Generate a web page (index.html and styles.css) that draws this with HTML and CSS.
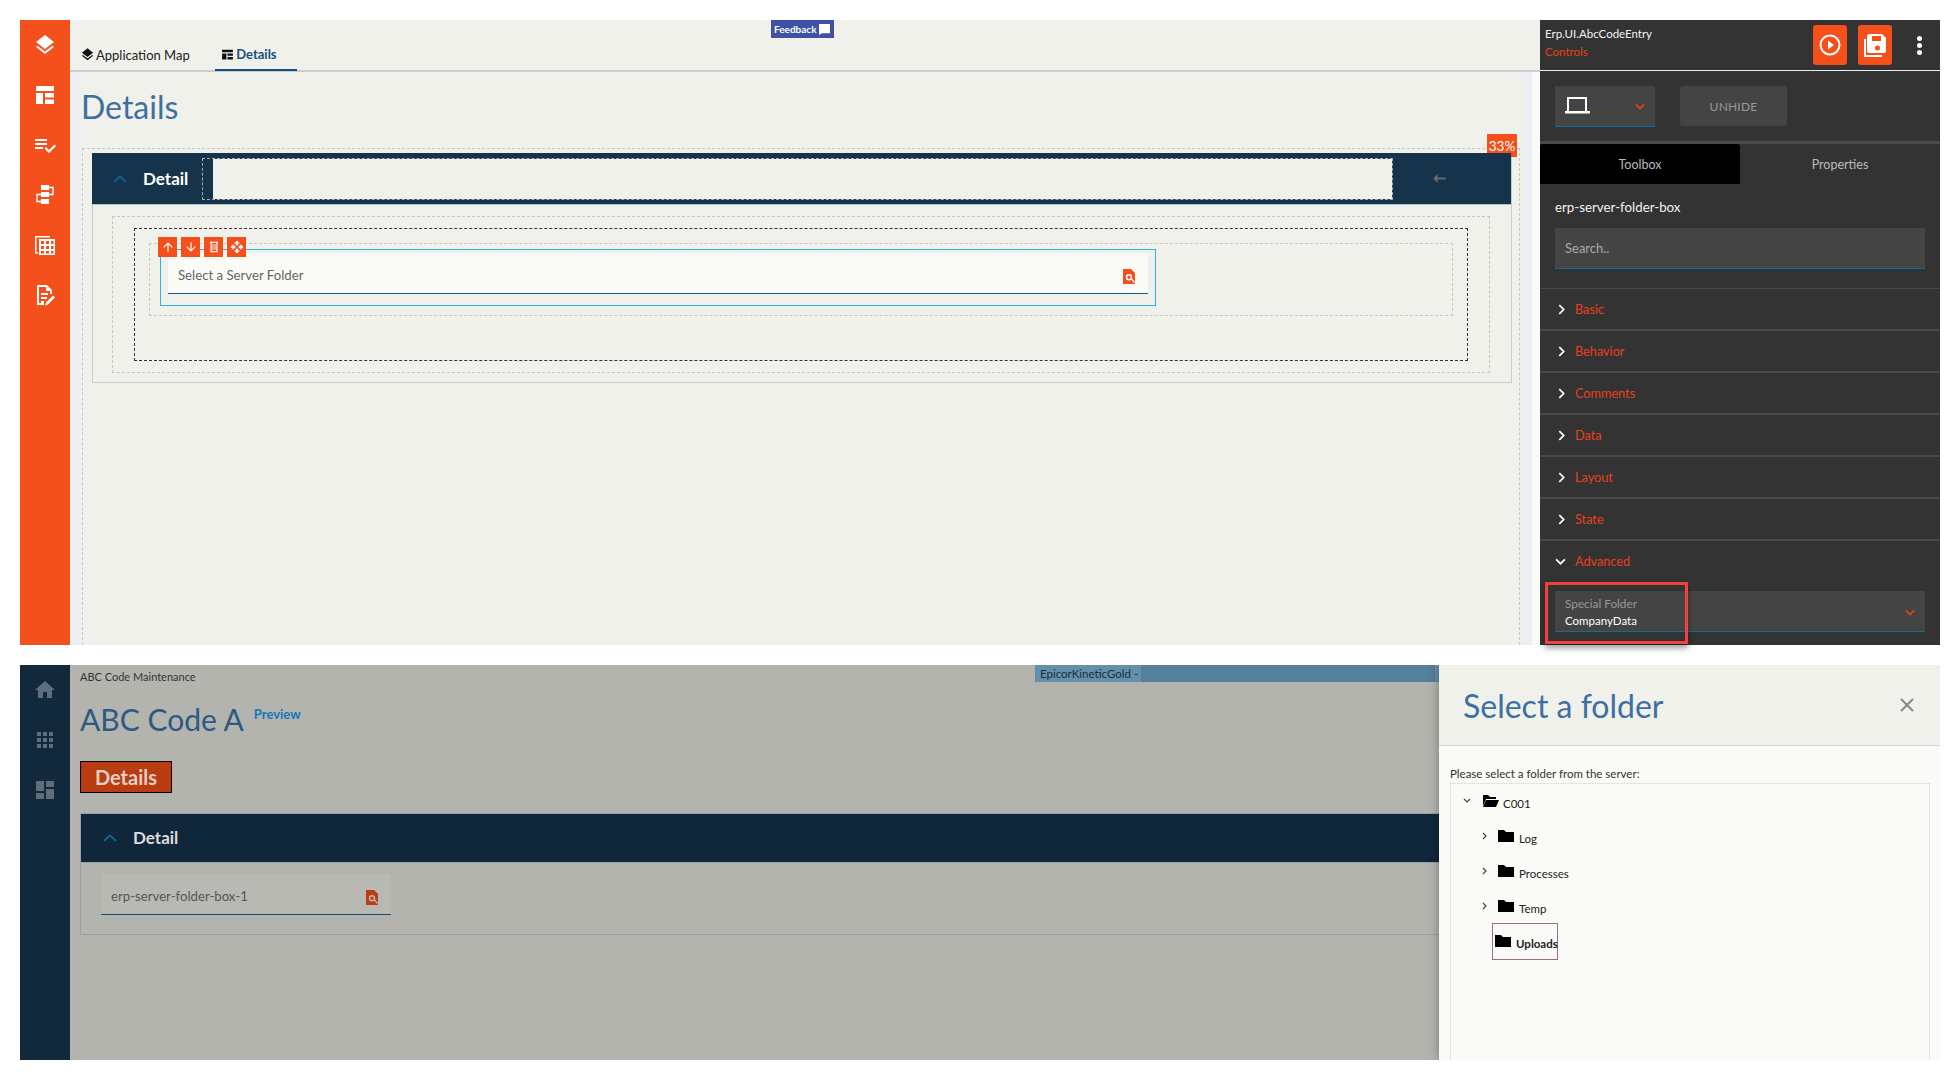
FILE: index.html
```html
<!DOCTYPE html>
<html lang="en">
<head>
<meta charset="utf-8">
<title>Server Folder Box</title>
<link rel="stylesheet" href="styles.css">
</head>
<body>
<section class="shot designer">
  <nav class="rail rail-orange">
    <svg viewBox="0 0 24 24"><path d="M11.99 18.54l-7.37-5.73L3 14.07l9 7 9-7-1.63-1.27-7.38 5.74zM12 16l7.36-5.73L21 9l-9-7-9 7 1.63 1.27L12 16z"/></svg>
    <svg viewBox="0 0 24 24"><path d="M3 3h18v5H3zM3 10h7v11H3zM12 10h9v4.500h-9zM12 16.500h9V21h-9z"/></svg>
    <svg viewBox="0 0 24 24"><path d="M14 10H2v2h12v-2zm0-4H2v2h12V6zM2 16h8v-2H2v2zm19.500-4.500L23 13l-6.990 7-4.510-4.500L13 14l3.010 3 5.490-5.500z"/></svg>
    <svg viewBox="0 0 24 24"><path d="M8 2h8v5H8zM8 9h8v5H8zM8 16h8v5H8z"/><path class="wire" d="M16 4.500h4v7h-4M8 11.500H4v7h4"/></svg>
    <svg viewBox="0 0 24 24"><path d="M2 3h15v1.500H3.500V19H5v1.500H2z"/><path fill-rule="evenodd" d="M6 6h16v16H6zM8 8v3h3V8zm5 0v3h3V8zm5 0v3h2.500V8zM8 13v3h3v-3zm5 0v3h3v-3zm5 0v3h2.500v-3zM8 18v2.500h3V18zm5 0v2.500h3V18zm5 0v2.500h2.500V18z"/></svg>
    <svg viewBox="0 0 24 24"><path d="M4 2h10l5 5v4h-2V8h-4V4H6v16h5v2H4zM8 10h7v2H8zM8 14h6v2H8zM8 18h3v2H8zM20 12.500l2 2-7 7-3 1 1-3z"/></svg>
  </nav>
  <main class="canvas">
    <header class="tabs">
      <a class="tab">
        <svg class="tab-icon tab-icon-map" viewBox="0 0 24 24"><path d="M11.990 18.540l-7.370-5.730L3 14.070l9 7 9-7-1.630-1.270-7.380 5.740zM12 16l7.360-5.730L21 9l-9-7-9 7 1.630 1.270L12 16z"/></svg>
        Application Map
      </a>
      <a class="tab tab-active">
        <svg class="tab-icon" viewBox="0 0 24 24"><path d="M2 3h20v5H2zM2 10h8v11H2zM12 10h10v4.500H12zM12 16.500h10V21H12z"/></svg>
        Details
      </a>
    </header>
    <div class="feedback">Feedback
      <svg viewBox="0 0 12 12"><path d="M0 0h12v10H3l-3 2z"/></svg>
    </div>
    <div class="workspace">
      <div class="page">
        <h1 class="page-title">Details</h1>
        <div class="drop-zone">
          <span class="percent">33%</span>
          <section class="panel">
            <div class="panel-head">
              <svg class="chev-up" viewBox="0 0 14 8"><path d="M1 7l6-5.500L13 7"/></svg>
              <span class="panel-name">Detail</span>
              <div class="head-slot"><div class="head-fill"></div></div>
              <svg class="head-arrow" viewBox="0 0 14 10"><path d="M5 0L0 5l5 5V6h9V4H5z"/></svg>
            </div>
            <div class="panel-body">
              <div class="dash-gray">
                <div class="dash-black">
                  <div class="dash-gray dash-row">
                    <div class="selected">
                      <div class="toolbar">
                        <button class="tool"><svg viewBox="0 0 24 24"><path d="M4 12l1.410 1.410L11 7.830V20h2V7.830l5.580 5.590L20 12l-8-8-8 8z"/></svg></button>
                        <button class="tool"><svg viewBox="0 0 24 24"><path d="M20 12l-1.410-1.410L13 16.170V4h-2v12.170l-5.580-5.590L4 12l8 8 8-8z"/></svg></button>
                        <button class="tool"><svg viewBox="0 0 24 24"><path fill-rule="evenodd" d="M5 3h14v2h-1v16H6V5H5zm3 2v14h8V5zm1.500 2h1.500v10H9.500zm3.500 0h1.500v10H13z"/></svg></button>
                        <button class="tool"><svg viewBox="0 0 24 24"><path d="M10 9h4V6h3l-5-5-5 5h3v3zm-1 1H6V7l-5 5 5 5v-3h3v-4zm14 2l-5-5v3h-3v4h3v3l5-5zm-9 3h-4v3H7l5 5 5-5h-3v-3z"/></svg></button>
                      </div>
                      <div class="field field-light">
                        <span>Select a Server Folder</span>
                        <svg class="file-search" viewBox="0 0 12 15"><path fill-rule="evenodd" d="M0 0h8l4 4v11H0zm6 5a3.200 3.200 0 100 6.400 3.200 3.200 0 000-6.400zm0 1.500a1.700 1.700 0 110 3.400 1.700 1.700 0 010-3.400z"/><path class="glass" d="M8 10.500l1-1 3 3.500-1 1z"/></svg>
                      </div>
                    </div>
                  </div>
                </div>
              </div>
            </div>
          </section>
        </div>
      </div>
    </div>
  </main>
  <aside class="props">
    <header class="props-head">
      <div class="props-title">
        <div class="props-name">Erp.UI.AbcCodeEntry</div>
        <div class="props-sub">Controls</div>
      </div>
      <button class="action"><svg viewBox="0 0 24 24"><circle cx="12" cy="12" r="9.500" class="ring"/><path d="M10 7.500l6 4.500-6 4.500z"/></svg></button>
      <button class="action"><svg viewBox="0 0 24 24"><path fill-rule="evenodd" d="M6 1h13l4 4v13c0 1-1 2-2 2H6c-1 0-2-1-2-2V3c0-1 1-2 2-2zm3 2v5h9V3zm5.500 9.500a2.500 2.500 0 100 5 2.500 2.500 0 000-5z"/><path d="M1 6h2v16h16v2H1z"/></svg></button>
      <div class="kebab"><i></i><i></i><i></i></div>
    </header>
    <div class="device-row">
      <div class="device">
        <svg class="laptop" viewBox="0 0 25 17"><path fill-rule="evenodd" d="M2 0h20v14h3v2.500H0V14h2zm2 2v12h16V2z"/></svg>
        <svg class="chev-red" viewBox="0 0 12 8"><path d="M1 1.500l5 5 5-5"/></svg>
      </div>
      <button class="unhide">UNHIDE</button>
    </div>
    <div class="props-tabs">
      <div class="props-tab props-tab-on">Toolbox</div>
      <div class="props-tab">Properties</div>
    </div>
    <div class="control-name">erp-server-folder-box</div>
    <div class="search">Search..</div>
    <div class="groups">
      <div class="group"><svg class="chev-white" viewBox="0 0 8 12"><path d="M1.500 1l5 5-5 5"/></svg>Basic</div>
      <div class="group"><svg class="chev-white" viewBox="0 0 8 12"><path d="M1.500 1l5 5-5 5"/></svg>Behavior</div>
      <div class="group"><svg class="chev-white" viewBox="0 0 8 12"><path d="M1.500 1l5 5-5 5"/></svg>Comments</div>
      <div class="group"><svg class="chev-white" viewBox="0 0 8 12"><path d="M1.500 1l5 5-5 5"/></svg>Data</div>
      <div class="group"><svg class="chev-white" viewBox="0 0 8 12"><path d="M1.500 1l5 5-5 5"/></svg>Layout</div>
      <div class="group"><svg class="chev-white" viewBox="0 0 8 12"><path d="M1.500 1l5 5-5 5"/></svg>State</div>
      <div class="group group-open"><svg class="chev-white chev-down" viewBox="0 0 12 8"><path d="M1 1.500l5 5 5-5"/></svg>Advanced</div>
    </div>
    <div class="special">
      <div class="special-text">
        <div class="special-label">Special Folder</div>
        <div class="special-value">CompanyData</div>
      </div>
      <svg class="chev-red" viewBox="0 0 12 8"><path d="M1 1.500l5 5 5-5"/></svg>
    </div>
    <div class="callout"></div>
  </aside>
</section>

<section class="shot runtime">
  <nav class="rail rail-navy">
    <svg viewBox="0 0 24 24"><path d="M10 20v-6h4v6h5v-8h3L12 3 2 12h3v8z"/></svg>
    <svg viewBox="0 0 24 24"><path d="M4 8h4V4H4v4zm6 12h4v-4h-4v4zm-6 0h4v-4H4v4zm0-6h4v-4H4v4zm6 0h4v-4h-4v4zm6-10v4h4V4h-4zm-6 4h4V4h-4v4zm6 6h4v-4h-4v4zm0 6h4v-4h-4v4z"/></svg>
    <svg viewBox="0 0 24 24"><path d="M3 13h8V3H3v10zm0 8h8v-6H3v6zm10 0h8V11h-8v10zm0-18v6h8V3h-8z"/></svg>
  </nav>
  <main class="app">
    <div class="banner">
      <span class="banner-text">EpicorKineticGold -</span>
      <span class="banner-fill"></span>
      <span class="banner-end"></span>
    </div>
    <div class="crumb">ABC Code Maintenance</div>
    <div class="app-title">
      <h1>ABC Code A</h1>
      <span class="preview">Preview</span>
    </div>
    <button class="details-btn">Details</button>
    <section class="app-panel">
      <div class="app-panel-head">
        <svg class="chev-up" viewBox="0 0 14 8"><path d="M1 7l6-5.500L13 7"/></svg>
        <span class="app-panel-name">Detail</span>
      </div>
      <div class="app-panel-body">
        <div class="field field-dim">
          <span>erp-server-folder-box-1</span>
          <svg class="file-search" viewBox="0 0 12 15"><path fill-rule="evenodd" d="M0 0h8l4 4v11H0zm6 5a3.200 3.200 0 100 6.400 3.200 3.200 0 000-6.400zm0 1.500a1.700 1.700 0 110 3.400 1.700 1.700 0 010-3.400z"/><path class="glass" d="M8 10.500l1-1 3 3.500-1 1z"/></svg>
        </div>
      </div>
    </section>
  </main>
  <aside class="drawer">
    <header class="drawer-head">
      <h2>Select a folder</h2>
      <svg class="close" viewBox="0 0 14 14"><path d="M1 1l12 12M13 1L1 13"/></svg>
    </header>
    <div class="drawer-body">
      <div class="tree-label">Please select a folder from the server:</div>
      <div class="tree">
        <div class="node node-root">
          <svg class="twist" viewBox="0 0 8 6"><path d="M1 1l3 3 3-3"/></svg>
          <svg class="folder" viewBox="0 0 16 12"><path d="M0 0h5l2 2h6v2H3L0 11zM3 5h13l-3 7H0z"/></svg>
          <span>C001</span>
        </div>
        <div class="node node-child">
          <svg class="twist twist-right" viewBox="0 0 6 8"><path d="M1 1l3 3-3 3"/></svg>
          <svg class="folder" viewBox="0 0 16 12"><path d="M0 0h6l2 2h8v10H0z"/></svg>
          <span>Log</span>
        </div>
        <div class="node node-child">
          <svg class="twist twist-right" viewBox="0 0 6 8"><path d="M1 1l3 3-3 3"/></svg>
          <svg class="folder" viewBox="0 0 16 12"><path d="M0 0h6l2 2h8v10H0z"/></svg>
          <span>Processes</span>
        </div>
        <div class="node node-child">
          <svg class="twist twist-right" viewBox="0 0 6 8"><path d="M1 1l3 3-3 3"/></svg>
          <svg class="folder" viewBox="0 0 16 12"><path d="M0 0h6l2 2h8v10H0z"/></svg>
          <span>Temp</span>
        </div>
        <div class="node-selected">
          <svg class="folder" viewBox="0 0 16 12"><path d="M0 0h6l2 2h8v10H0z"/></svg>
          <span>Uploads</span>
        </div>
      </div>
    </div>
  </aside>
</section>
</body>
</html>
```
FILE: styles.css
```css
* { box-sizing: border-box; }
html, body { margin: 0; padding: 0; }
body {
  width: 1960px;
  height: 1080px;
  padding: 20px;
  background: #fff;
  overflow: hidden;
  font-family: "Lato", "Noto Sans", sans-serif;
  display: flex;
  flex-direction: column;
  gap: 20px;
}
h1, h2 { margin: 0; font-weight: 400; }
button { font-family: inherit; border: 0; padding: 0; }

.shot { display: flex; width: 1920px; position: relative; flex: none; }
.designer { height: 625px; }
.runtime { height: 395px; overflow: hidden; }

.rail { width: 50px; flex: none; display: flex; flex-direction: column; align-items: center; }
.rail svg { fill: #fff; width: 24px; height: 24px; flex: none; }
.rail .wire { fill: none; stroke: #fff; stroke-width: 1.500; }
.rail-orange { background: #f4501c; padding-top: 13px; gap: 26px; }
.rail-navy { background: #12293b; padding-top: 13px; gap: 26px; }
.rail-navy svg { fill: #5f6e7a; }

/* designer canvas */
.canvas { width: 1470px; flex: none; background: #f0f1eb; display: flex; flex-direction: column; position: relative; }
.tabs { height: 52px; flex: none; border-bottom: 2px solid #cccccb; display: flex; align-items: flex-end; padding-left: 10px; gap: 25px; }
.tab { height: 50px; display: flex; align-items: center; padding-top: 19px; font-size: 13px; color: #222; gap: 2px; position: relative; }
.tab-icon { width: 13px; height: 13px; fill: #111; flex: none; }
.tab-icon-map { width: 15px; height: 15px; margin-right: -1px; }
.tab-active { width: 82px; justify-content: flex-start; padding-left: 6.500px; color: #15507a; font-weight: 700; border-bottom: 2px solid #15507a; height: 51px; margin-bottom: -1px; }

.feedback { position: absolute; left: 701px; top: 0; width: 63px; height: 18px; background: #3f51a5; color: #fff; font-size: 10px; font-weight: 700; display: flex; align-items: center; justify-content: space-between; padding: 0 4px 0 3px; }
.feedback svg { width: 11px; height: 11px; fill: #fff; }

.workspace { flex: 1; min-height: 0; display: flex; border-right: 8px solid #fafaf6; }
.page { flex: 1; min-width: 0; border-left: 11px solid #ecf0f3; border-right: 11px solid #ecf0f3; display: flex; flex-direction: column; }
.page-title { height: 76px; flex: none; font-size: 32px; line-height: 70px; color: #3d6f9f; }

.drop-zone { flex: 1; min-height: 0; margin: 0 1px 0 1px; border: 1px dashed #c6c6c2; border-bottom: 0; padding: 4px 7px 0 9px; position: relative; }
.percent { position: absolute; right: 2px; top: -15px; width: 30px; height: 23px; background: #f4501c; color: #fff; font-size: 13.500px; display: flex; align-items: center; justify-content: center; }

.panel { border: 1px solid #c4cdd0; border-top: 0; height: 230px; }
.panel-head { height: 52px; background: #15344b; border-bottom: 1px solid #a9c6d4; display: flex; align-items: center; padding-left: 21px; position: relative; margin: 0 0 0 -1px; }
.chev-up { width: 14px; height: 8px; fill: none; stroke: #15608f; stroke-width: 2; flex: none; }
.panel-name { color: #fff; font-weight: 700; font-size: 17px; margin-left: 16px; width: 59px; flex: none; }
.head-slot { width: 1191px; height: 42px; border: 1px dashed #aaa; padding-left: 10px; flex: none; }
.head-fill { height: 100%; background: #f0f1eb; }
.head-arrow { width: 13px; height: 9px; fill: #66696b; margin-left: 40px; flex: none; }

.panel-body { padding: 11px 21px 10px 19px; }
.dash-gray { border: 1px dashed #c6c6c2; padding: 11px 21px 11px 21px; }
.dash-black { border: 1px dashed #333; padding: 14px 14px 44px 14px; height: 133px; }
.dash-row { padding: 5px 296px 0 10px; height: 73px; }
.selected { border: 1px solid #2bb5e0; padding: 3px 7px 0 7px; height: 57px; position: relative; width: 996px; }
.toolbar { position: absolute; left: -3px; top: -13px; display: flex; gap: 4px; }
.tool { width: 19px; height: 20px; background: #f4501c; display: flex; align-items: center; justify-content: center; }
.tool svg { width: 14px; height: 14px; fill: #fff; }

.field { display: flex; align-items: center; justify-content: space-between; font-size: 13.200px; }
.field-light { height: 41px; background: #fafaf6; border-bottom: 1px solid #15608a; color: #666; padding: 3px 13px 0 10px; }
.field-dim { width: 290px; height: 41px; background: #b9b9b4; border-bottom: 1px solid #0f4f7a; color: #555; padding: 3px 13px 0 10px; }
.file-search { width: 12px; height: 15px; fill: #f4501c; margin-top: 3px; }
.file-search .glass { fill: #fafaf6; }
.field-dim .file-search { fill: #b93c12; margin-top: 4px; }
.field-dim .file-search .glass { fill: #b9b9b4; }

/* properties */
.props { width: 400px; flex: none; background: #333; position: relative; color: #ddd; }
.props-head { height: 51px; border-bottom: 1px solid #eee; display: flex; padding: 5px 0 0 5px; position: relative; }
.props-title { width: 268px; flex: none; }
.props-name { font-size: 11.500px; line-height: 18px; color: #f2f2f2; }
.props-sub { font-size: 11.500px; line-height: 18px; color: #e8401c; }
.action { width: 34px; height: 40px; background: #f4501c; border-radius: 3px; display: flex; align-items: center; justify-content: center; flex: none; margin-right: 11px; }
.action svg { width: 24px; height: 24px; fill: #fff; }
.action .ring { fill: none; stroke: #fff; stroke-width: 2; }
.kebab { display: flex; flex-direction: column; gap: 2px; margin: 11px 0 0 14px; }
.kebab i { display: block; width: 5px; height: 5px; border-radius: 50%; background: #fff; }

.device-row { height: 73px; padding-top: 15px; padding-left: 15px; display: flex; gap: 25px; border-bottom: 3px solid #4a4a4a; }
.device { width: 100px; height: 41px; background: #444; border-bottom: 1px solid #106aa5; display: flex; justify-content: space-between; padding: 11px 9px 0 10px; }
.laptop { width: 25px; height: 17px; fill: #fff; }
.chev-red { width: 10px; height: 7px; fill: none; stroke: #e8401c; stroke-width: 2; align-self: center; flex: none; }
.device .chev-red { align-self: flex-start; margin-top: 6px; margin-right: 1px; }
.unhide { width: 107px; height: 40px; background: #444; color: #999; border-radius: 3px; font-size: 12px; letter-spacing: .2px; padding-top: 1px; }

.props-tabs { display: flex; height: 40px; }
.props-tab { width: 200px; color: #bbb; font-size: 12.500px; display: flex; align-items: center; justify-content: center; }
.props-tab-on { background: #000; border-radius: 3px 3px 0 0; }
.control-name { margin: 15px 0 0 15px; font-size: 13.300px; line-height: 17px; color: #f2f2f2; }
.search { margin: 12px 15px 0; height: 41px; background: #444; border-bottom: 1px solid #106aa5; padding: 0 10px; color: #aaa; font-size: 13px; line-height: 40px; }
.groups { margin-top: 19px; }
.group { height: 42px; border-top: 2px solid #4a4a4a; color: #e8401c; font-size: 12.700px; display: flex; align-items: center; padding-left: 18px; gap: 10px; }
.group:first-child { border-top-width: 1px; height: 41px; }
.chev-white { width: 7px; height: 11px; fill: none; stroke: #fff; stroke-width: 2; flex: none; }
.chev-down { width: 11px; height: 7px; margin-left: -3px; margin-right: -1px; }
.special { margin: 10px 15px 0; height: 41px; background: #444; border-bottom: 1px solid #106aa5; display: flex; justify-content: space-between; align-items: center; padding: 2px 10px 0; }
.special-label { font-size: 11.800px; line-height: 17px; color: #999; }
.special-value { font-size: 11.500px; line-height: 17px; color: #fff; }
.callout { position: absolute; left: 5px; top: 562px; width: 143px; height: 62px; border: 3px solid #f04040; box-shadow: 0 4px 6px rgba(0,0,0,.4); }

/* runtime */
.app { width: 1369px; flex: none; background: #b4b4af; padding: 0 0 0 10px; position: relative; overflow: hidden; }
.banner { position: absolute; right: 0; top: 0; left: 965px; height: 17px; display: flex; font-size: 12px; color: #1c2f40; }
.banner-text { background: #6590ac; padding: 0 4px 0 5px; line-height: 17px; width: 106px; white-space: nowrap; flex: none; overflow: hidden; font-size: 11.500px; }
.banner-fill { flex: 1; background: #54809c; }
.banner-end { width: 4px; background: #6590ac; }
.crumb { font-size: 11px; line-height: 15px; padding-top: 4px; color: #333; height: 22px; }
.app-title { height: 74px; display: flex; align-items: flex-start; gap: 10px; }
.app-title h1 { font-size: 30px; line-height: 44px; color: #2d5a82; padding-top: 10px; }
.preview { color: #1377ba; font-weight: 700; font-size: 13px; line-height: 16px; margin-top: 19px; }
.details-btn { display: block; width: 92px; height: 32px; background: #b93c12; border: 1px solid #000; color: #e4cfc4; font-size: 20px; font-weight: 700; }
.app-panel { margin-top: 20px; border: 1px solid #96a0a5; height: 122px; margin-right: -20px; }
.app-panel-head { height: 49px; background: #10273b; display: flex; align-items: center; padding-left: 22px; border-bottom: 1px solid #8fa4b0; padding-bottom: 1px; }
.app-panel-name { color: #ddd; font-weight: 700; font-size: 17px; margin-left: 16px; }
.app-panel-body { padding: 11px 20px; }

.drawer { width: 501px; flex: none; background: #fafaf7; position: relative; z-index: 2; box-shadow: 0 0 10px rgba(0,0,0,.35); }
.drawer-head { height: 81px; background: #f0f1eb; border-bottom: 1px solid #d6d6d2; display: flex; align-items: center; justify-content: space-between; padding: 0 26px 0 24px; }
.drawer-head h2 { font-size: 32px; color: #3d70a0; }
.close { width: 14px; height: 14px; fill: none; stroke: #888; stroke-width: 2; }
.drawer-body { padding: 20px 0 0 11px; }
.tree-label { font-size: 11.500px; line-height: 15px; color: #333; margin-bottom: 2px; }
.tree { width: 480px; height: 290px; border: 1px solid #e5e5e0; padding: 5px 0 0 12px; font-size: 11.500px; color: #222; }
.node { height: 35px; display: flex; align-items: flex-start; }
.twist { width: 8px; height: 6px; fill: none; stroke: #444; stroke-width: 1.200; margin-top: 9px; flex: none; }
.twist-right { width: 6px; height: 8px; margin-top: 8px; }
.folder { width: 16px; height: 12px; fill: #000; flex: none; margin-top: 6px; }
.node span { padding-top: 7px; line-height: 15px; margin-left: 4px; }
.node-root .folder { margin-left: 12px; }
.node-child { padding-left: 19px; }
.node-child .folder { margin-left: 10px; margin-top: 6px; }
.node-child span { padding-top: 7px; margin-left: 5px; }
.node-selected { margin: -6px 0 0 29px; width: 66px; height: 37px; border: 1px solid #a06a90; display: flex; padding: 11px 0 0 2px; font-weight: 700; gap: 5px; line-height: 15px; }
.node-selected .folder { margin-top: 0; }
.node-selected span { padding-top: 1px; }
```
